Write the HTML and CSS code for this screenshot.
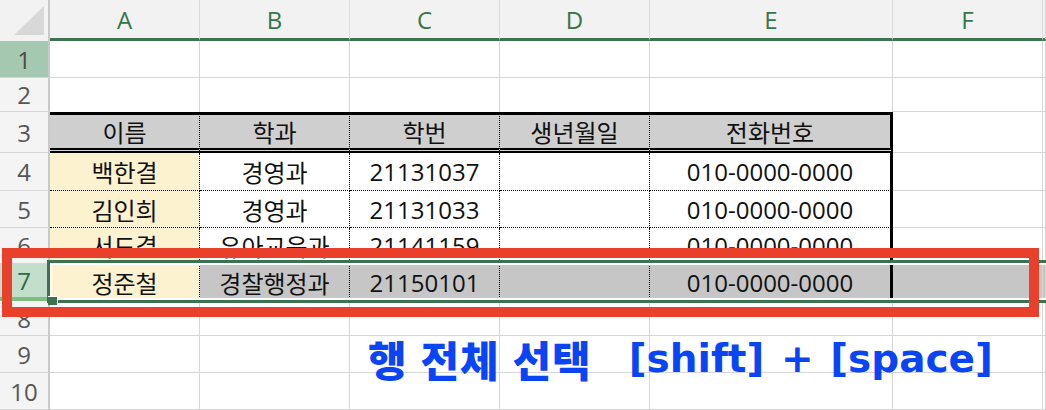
FILE: index.html
```html
<!DOCTYPE html>
<html lang="ko">
<head>
<meta charset="utf-8">
<link rel="stylesheet" href="styles.css">
</head>
<body>
<div class="wrap">
  <div class="sheet">
    <!-- header row -->
    <div class="corner"><svg width="48" height="38" viewBox="0 0 48 38"><polygon points="14,35 44,35 44,6" fill="#d8d8d8"/></svg></div>
    <div class="ch">A</div><div class="ch">B</div><div class="ch">C</div><div class="ch">D</div><div class="ch">E</div><div class="ch">F</div><div class="ch"></div>
    <!-- row 1 -->
    <div class="rh sel1">1</div>
    <div class="c"></div><div class="c"></div><div class="c"></div><div class="c"></div><div class="c"></div><div class="c"></div><div class="c"></div>
    <!-- row 2 -->
    <div class="rh">2</div>
    <div class="c nb"></div><div class="c nb"></div><div class="c nb"></div><div class="c nb"></div><div class="c nb"></div><div class="c"></div><div class="c"></div>
    <!-- row 3 -->
    <div class="rh">3</div>
    <div class="c th dv">이름</div><div class="c th dv">학과</div><div class="c th dv">학번</div><div class="c th dv">생년월일</div><div class="c th ev">전화번호</div><div class="c"></div><div class="c"></div>
    <!-- row 4 -->
    <div class="rh">4</div>
    <div class="c td dv yl">백한결</div><div class="c td dv">경영과</div><div class="c td dv">21131037</div><div class="c td dv"></div><div class="c td ev">010-0000-0000</div><div class="c"></div><div class="c"></div>
    <!-- row 5 -->
    <div class="rh">5</div>
    <div class="c td dv yl">김인희</div><div class="c td dv">경영과</div><div class="c td dv">21131033</div><div class="c td dv"></div><div class="c td ev">010-0000-0000</div><div class="c"></div><div class="c"></div>
    <!-- row 6 -->
    <div class="rh">6</div>
    <div class="c td dv yl">서도결</div><div class="c td dv">유아교육과</div><div class="c td dv">21141159</div><div class="c td dv"></div><div class="c td ev">010-0000-0000</div><div class="c"></div><div class="c"></div>
    <!-- row 7 -->
    <div class="rh sel7">7</div>
    <div class="c dv yl">정준철</div><div class="c dv gr">경찰행정과</div><div class="c dv gr">21150101</div><div class="c dv gr"></div><div class="c ev gr">010-0000-0000</div><div class="c gr"></div><div class="c gr"></div>
    <!-- row 8 -->
    <div class="rh">8</div>
    <div class="c"></div><div class="c"></div><div class="c"></div><div class="c"></div><div class="c"></div><div class="c"></div><div class="c"></div>
    <!-- row 9 -->
    <div class="rh">9</div>
    <div class="c"></div><div class="c"></div><div class="c"></div><div class="c"></div><div class="c"></div><div class="c"></div><div class="c"></div>
    <!-- row 10 -->
    <div class="rh">10</div>
    <div class="c"></div><div class="c"></div><div class="c"></div><div class="c"></div><div class="c"></div><div class="c"></div><div class="c"></div>
  </div>

  <div class="selection"></div>
  <div class="handle"></div>
  <div class="redbox"></div>
  <div class="caption"><span class="ko">행 전체 선택</span><span class="keys">[shift] + [space]</span></div>
</div>
</body>
</html>
```

FILE: styles.css
```css
html, body {
  margin: 0;
  padding: 0;
  background: #ffffff;
}

.wrap {
  position: relative;
  width: 1046px;
  height: 410px;
  overflow: hidden;
}

.sheet {
  display: grid;
  grid-template-columns: 50px 150px 150px 150px 150px 243px 150px 1fr;
  grid-template-rows: 41px 37px 34px 41px 38px 37px 36px 37px 35px 37px 37px;
  width: 1046px;
  font-family: "Open Sans", "Noto Sans CJK KR", sans-serif;
}

.sheet > div {
  box-sizing: border-box;
  display: flex;
  align-items: center;
  justify-content: center;
}

.corner {
  background: #f2f2f2;
  border-right: 2px solid #c9c9c9;
  align-items: flex-start !important;
  justify-content: flex-start !important;
}

.ch {
  background: #f2f2f2;
  border-right: 1px solid #dadada;
  border-bottom: 3px solid #3b7250;
  color: #357649;
  font-size: 24px;
  padding-top: 1px;
}

.rh {
  background: #f4f4f4;
  border-right: 2px solid #c9c9c9;
  border-bottom: 1px solid #d6d6d6;
  color: #565656;
  font-size: 24px;
}

.rh.sel1 {
  background: #a4c8b0;
  color: #4a4a4a;
}

.rh.sel7 {
  background: #c3dfcb;
  color: #2c6a40;
  border-bottom: 4px solid #7cbf80;
}

.c {
  border-right: 1px solid #d6d6d6;
  border-bottom: 1px solid #d6d6d6;
  color: #111111;
  font-size: 24px;
}

.c.nb {
  border-bottom: none;
}

.c.th {
  background: #d0cfcf;
  border-top: 3px solid #000000;
  border-bottom: 5px double #000000;
}

.c.td {
  border-bottom: 1px dotted #000000;
}

.c.dv {
  border-right: 1px dotted #000000;
}

.c.ev {
  border-right: 3px solid #000000;
}

.c.yl {
  background: #fdf2d0;
}

.c.gr {
  background: #c6c6c6;
}

.selection {
  position: absolute;
  left: 47px;
  top: 260px;
  width: 1030px;
  height: 43px;
  box-sizing: border-box;
  border: 3px solid #3b7250;
  border-right: none;
  box-shadow: inset 0 0 0 2px #ffffff;
}

.handle {
  position: absolute;
  left: 48px;
  top: 296px;
  width: 9px;
  height: 8px;
  background: #3b7250;
  border: 1px solid #ffffff;
  border-left: none;
  border-bottom: none;
}

.redbox {
  position: absolute;
  left: 2px;
  top: 248px;
  width: 1037px;
  height: 69px;
  box-sizing: border-box;
  border: 10px solid #e8402a;
}

.caption {
  position: absolute;
  left: 368px;
  top: 334px;
  display: flex;
  align-items: center;
  gap: 37px;
  color: #0a45f5;
  font-family: "DejaVu Sans", "Noto Sans CJK KR", sans-serif;
  font-weight: 700;
  font-size: 39px;
  line-height: 50px;
  white-space: nowrap;
}

.caption .ko {
  font-family: "Noto Sans CJK KR", sans-serif;
  font-weight: 900;
  font-size: 42px;
  letter-spacing: 1px;
}

.caption .keys {
  word-spacing: 3px;
}
```
